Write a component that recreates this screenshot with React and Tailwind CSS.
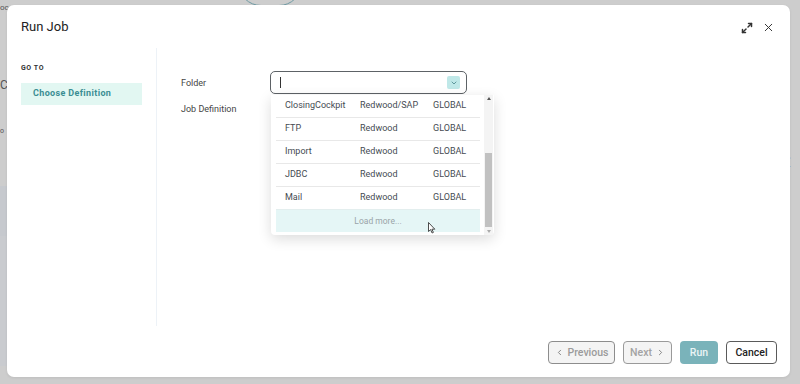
import React from 'react';
import { X, ChevronDown, ChevronLeft, ChevronRight } from 'lucide-react';

const rows = [
  { name: 'ClosingCockpit', owner: 'Redwood/SAP', scope: 'GLOBAL' },
  { name: 'FTP', owner: 'Redwood', scope: 'GLOBAL' },
  { name: 'Import', owner: 'Redwood', scope: 'GLOBAL' },
  { name: 'JDBC', owner: 'Redwood', scope: 'GLOBAL' },
  { name: 'Mail', owner: 'Redwood', scope: 'GLOBAL' },
];

// faint app content behind the overlay
const Backdrop = () => (
  <div className="absolute inset-0 overflow-hidden text-[10px] text-[#555]">
    <div className="absolute left-[238px] top-[-40px] w-[64px] h-[46px] rounded-full border border-[#6f9aa3]" />
    <div className="absolute left-0 top-[2px] text-[8px]">oc</div>
    <div className="absolute left-0 top-[76px] text-[12px]">C</div>
    <div className="absolute left-0 top-[126px] text-[7px]">o</div>
    <div className="absolute left-0 top-[199px] text-[7px]">o</div>
    <div className="absolute left-[780px] top-[156px] text-[9px]">d (</div>
    <div className="absolute left-0 top-[186px] w-[7px] h-[50px] bg-[#c6c9ce]" />
    <div className="absolute left-0 top-[236px] w-[7px] h-[130px] bg-[#c9cbcf]" />
  </div>
);

const ExpandIcon = () => (
  <svg width="12" height="12" viewBox="0 0 12 12" fill="none" stroke="#333" strokeWidth="1.5" strokeLinecap="round" strokeLinejoin="round">
    <path d="M7.5 1.5h3v3" />
    <path d="M10.5 1.5 7 5" />
    <path d="M4.5 10.5h-3v-3" />
    <path d="M1.5 10.5 5 7" />
  </svg>
);

const Pointer = () => (
  <svg className="absolute left-[157px] top-[127px]" width="8" height="12" viewBox="0 0 8 12">
    <path d="M0.5 0.5 L0.5 9.5 L2.6 7.6 L4.1 11 L5.4 10.4 L3.9 7.2 L6.8 7.2 Z" fill="#fff" stroke="#222" strokeWidth="0.8" strokeLinejoin="round" />
  </svg>
);

const Dropdown = () => (
  <div className="absolute left-[1px] top-[calc(100%+1px)] w-[223px] h-[140px] bg-white rounded-b-[4px] shadow-[0_4px_14px_rgba(0,0,0,0.14)] flex">
    <div className="w-[204px] ml-[5px] flex flex-col">
      {rows.map((r, i) => (
        <div
          key={r.name}
          className={`flex items-center text-[9px] text-[#454b52] ${i === 0 ? 'h-[22px]' : 'h-[23px] border-t border-[#e8e8e8]'}`}
        >
          <span className="w-[84px] pl-[9px]">{r.name}</span>
          <span className="w-[73px]">{r.owner}</span>
          <span>{r.scope}</span>
        </div>
      ))}
      <div className="h-[23px] border-t border-[#e3eeee] bg-[#e5f6f6] flex items-center justify-center text-[8.5px] text-[#9aa4a8]">
        Load more...
      </div>
    </div>
    <div className="ml-[4px] w-[9px] flex flex-col items-center bg-[#f4f4f4] pt-[2px] pb-[2px]">
      <div className="w-0 h-0 border-l-[2px] border-r-[2px] border-b-[3px] border-l-transparent border-r-transparent border-b-[#555]" />
      <div className="flex-1 w-full flex flex-col">
        <div className="h-[53px]" />
        <div className="mx-[1px] h-[74px] bg-[#c1c1c1]" />
      </div>
      <div className="w-0 h-0 border-l-[2px] border-r-[2px] border-t-[3px] border-l-transparent border-r-transparent border-t-[#aaa]" />
    </div>
    <Pointer />
  </div>
);

const App = () => {
  return (
    <div
      className="relative w-[800px] h-[384px] bg-[#cdcdcd] pl-[7px] pt-[5px] pr-[10px] pb-[7px]"
      style={{ fontFamily: 'Roboto, "Liberation Sans", sans-serif' }}
    >
      <Backdrop />
      <div className="relative h-full bg-white rounded-[7px] flex flex-col shadow-[0_1px_3px_rgba(0,0,0,0.08)]">
        <div className="h-[43px] flex items-start justify-between pl-[14px] pr-[15px] pt-[11px]">
          <h1 className="text-[13px] leading-[22px] text-[#222]">Run Job</h1>
          <div className="flex items-center gap-[9px] pt-[5px] text-[#333]">
            <ExpandIcon />
            <X size={13} strokeWidth={1.8} />
          </div>
        </div>

        <div className="flex-1 flex">
          <div className="w-[149px] px-[14px] pt-[15px]">
            <div className="text-[7px] leading-[10px] font-bold tracking-[0.08em] text-[#333]">GO TO</div>
            <div className="mt-[10px] h-[22px] bg-[#e2f7f2] flex items-center pl-[12px] text-[9px] font-bold tracking-[0.04em] text-[#3b8e92]">
              Choose Definition
            </div>
          </div>
          <div className="w-[1px] bg-[#edf2f7]" />
          <div className="flex-1 pl-[24px] pt-[23px]">
            <div className="flex items-center">
              <div className="w-[89px] pt-[2px] text-[9px] text-[#444]">Folder</div>
              <div className="relative">
                <div className="w-[197px] h-[23px] border border-[#5d6266] rounded-[5px] flex items-center pl-[9px] pr-[6px]">
                  <div className="w-[1px] h-[11px] bg-[#333]" />
                  <div className="ml-auto w-[13px] h-[13px] rounded-[2px] bg-[#bfe8e8] flex items-center justify-center text-[#2f6f75]">
                    <ChevronDown size={8} strokeWidth={2} />
                  </div>
                </div>
                <Dropdown />
              </div>
            </div>
            <div className="mt-[9px] h-[14px] flex items-center text-[9px] text-[#444]">Job Definition</div>
          </div>
        </div>

        <div className="h-[51px] flex items-start justify-end gap-[8px] pr-[13px] pt-[15px] text-[10.5px] font-medium">
          <button className="w-[67px] h-[23px] rounded-[4px] border border-[#8d8d8d] bg-[#f4f4f4] text-[#9b9b9b] flex items-center justify-center gap-[4px]">
            <ChevronLeft size={9} strokeWidth={2} className="text-[#666]" />
            Previous
          </button>
          <button className="w-[49px] h-[23px] rounded-[4px] border border-[#9a9a9a] bg-[#f4f4f4] text-[#a3a3a3] flex items-center justify-center gap-[4px]">
            Next
            <ChevronRight size={9} strokeWidth={2} className="text-[#666]" />
          </button>
          <button className="w-[38px] h-[23px] rounded-[4px] bg-[#7ab3ba] text-[#eaf4f5] flex items-center justify-center">
            Run
          </button>
          <button className="w-[51px] h-[23px] rounded-[4px] border border-[#5a5a5a] bg-white text-[#222] flex items-center justify-center">
            Cancel
          </button>
        </div>
      </div>
    </div>
  );
};

export default App;
